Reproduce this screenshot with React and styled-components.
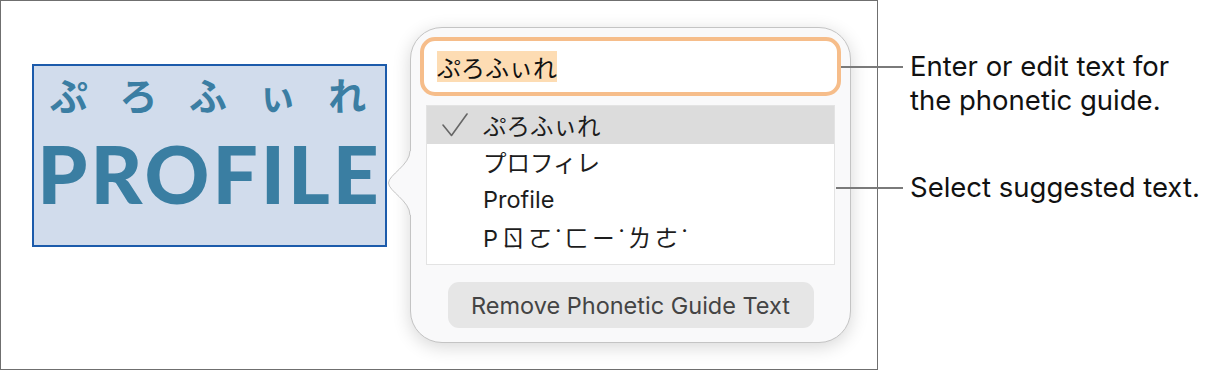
import React from 'react';
import styled, { createGlobalStyle } from 'styled-components';

const GlobalStyle = createGlobalStyle`
  html, body {
    margin: 0;
    padding: 0;
    background: #ffffff;
  }
  body {
    font-family: Inter, "Noto Sans CJK JP", sans-serif;
  }
`;

const suggestions = [
  { text: 'ぷろふぃれ', checked: true },
  { text: 'プロフィレ' },
  { text: 'Profile' },
  { text: 'Pㄖㄛ˙ㄈㄧ˙ㄌㄜ˙', bopomofo: true },
];

const furigana = ['ぷ', 'ろ', 'ふ', 'ぃ', 'れ'];

const App = () => {
  return (
    <>
      <GlobalStyle />
      <Page>
        <Frame>
          <TextBox>
            <Ruby>
              {furigana.map((k, i) => (
                <RubyChar key={i}>{k}</RubyChar>
              ))}
            </Ruby>
            <BigWord>PROFILE</BigWord>
          </TextBox>
          <Popover>
            <Arrow width="26" height="64" viewBox="0 0 26 64">
              <path d="M23 0 C23 14 1.5 24 1.5 32 C1.5 40 23 50 23 64 L26 64 L26 0 Z" fill="#f9f9fa" />
              <path d="M23 0 C23 14 1.5 24 1.5 32 C1.5 40 23 50 23 64" fill="none" stroke="#c4c4c4" strokeWidth="1" />
            </Arrow>
            <InputRing>
              <Selected>ぷろふぃれ</Selected>
            </InputRing>
            <List>
              {suggestions.map((s) => (
                <Row key={s.text} $active={s.checked}>
                  <CheckCell>
                    {s.checked && (
                      <svg width="26" height="24" viewBox="0 0 26 24">
                        <path d="M1 12 L9.5 22.5 L25 1" fill="none" stroke="#666" strokeWidth="1.6" strokeLinecap="round" strokeLinejoin="round" />
                      </svg>
                    )}
                  </CheckCell>
                  <RowText $bopomofo={s.bopomofo}>{s.text}</RowText>
                </Row>
              ))}
            </List>
            <RemoveBtn>Remove Phonetic Guide Text</RemoveBtn>
          </Popover>
        </Frame>
        <Notes>
          <Note $top={51} $reach={37}>
            <Leader $reach={37} />
            <NoteText>
              Enter or edit text for
              <br />
              the phonetic guide.
            </NoteText>
          </Note>
          <Note $top={55} $reach={42}>
            <Leader $reach={42} />
            <NoteText>Select suggested text.</NoteText>
          </Note>
        </Notes>
      </Page>
    </>
  );
};

const Page = styled.div`
  display: flex;
  align-items: flex-start;
  width: 1213px;
  height: 372px;
  overflow: hidden;
`;

const Frame = styled.div`
  box-sizing: border-box;
  flex: none;
  display: flex;
  align-items: flex-start;
  width: 878px;
  height: 370px;
  border: 1.5px solid #6f6f6f;
  padding-left: 31px;
`;

const TextBox = styled.div`
  box-sizing: border-box;
  width: 355px;
  height: 183px;
  margin-top: 63px;
  border: 2px solid #1c5bab;
  background: #d1dcec;
  display: flex;
  flex-direction: column;
  align-items: center;
`;

const Ruby = styled.div`
  display: grid;
  grid-template-columns: repeat(5, 1fr);
  width: 100%;
  padding: 6px 3px 0 0;
  box-sizing: border-box;
`;

const RubyChar = styled.span`
  text-align: center;
  font-family: "Noto Sans CJK JP", sans-serif;
  font-weight: 700;
  font-size: 38px;
  line-height: 44px;
  color: #3b7ea3;
`;

const BigWord = styled.div`
  margin-top: 17px;
  font-family: Lato, "Open Sans", sans-serif;
  font-weight: 900;
  font-size: 80px;
  line-height: 80px;
  letter-spacing: 3px;
  color: #3a7ea2;
`;

const Popover = styled.div`
  position: relative;
  box-sizing: border-box;
  width: 441px;
  height: 316px;
  margin-top: 26px;
  margin-left: 23px;
  padding: 9px 9px 0 9px;
  border: 1px solid #c4c4c4;
  border-radius: 32px;
  background: #f9f9fa;
  box-shadow: 0 4px 18px rgba(0, 0, 0, 0.16);
  display: flex;
  flex-direction: column;
  align-items: center;
`;

const Arrow = styled.svg`
  position: absolute;
  left: -24px;
  top: 123px;
`;

const InputRing = styled.div`
  box-sizing: border-box;
  width: 421px;
  height: 59px;
  border: 4px solid #f6bd8a;
  border-radius: 15px;
  background: #ffffff;
  display: flex;
  align-items: center;
  padding-left: 13px;
`;

const Selected = styled.span`
  font-family: "Noto Sans CJK JP", sans-serif;
  font-size: 24px;
  line-height: 31px;
  color: #111;
  background: #fddcb3;
`;

const List = styled.div`
  box-sizing: border-box;
  width: 409px;
  height: 160px;
  margin-top: 9px;
  border: 1.5px solid #e3e3e3;
  background: #ffffff;
`;

const Row = styled.div`
  display: flex;
  align-items: center;
  height: 37.5px;
  background: ${(p) => (p.$active ? '#dcdcdc' : 'transparent')};
`;

const CheckCell = styled.div`
  width: 56px;
  display: flex;
  justify-content: flex-end;
  padding-right: 15px;
  box-sizing: border-box;
`;

const RowText = styled.span`
  font-family: ${(p) =>
    p.$bopomofo ? 'Inter, "Noto Sans CJK TC", sans-serif' : 'Inter, "Noto Sans CJK JP", sans-serif'};
  font-size: 23.5px;
  letter-spacing: ${(p) => (p.$bopomofo ? '3.5px' : '0')};
  color: #1d1d1d;
  white-space: pre;
`;

const RemoveBtn = styled.button`
  width: 366px;
  height: 46px;
  margin-top: 17px;
  border: 0;
  border-radius: 11px;
  background: #e6e6e6;
  font-family: Inter, sans-serif;
  font-size: 23.5px;
  color: #444;
  padding: 0;
`;

const Notes = styled.div`
  display: flex;
  flex-direction: column;
`;

const Note = styled.div`
  position: relative;
  z-index: 1;
  display: flex;
  align-items: flex-start;
  margin-top: ${(p) => p.$top}px;
  margin-left: -${(p) => p.$reach}px;
`;

const Leader = styled.div`
  width: ${(p) => p.$reach + 25}px;
  height: 2px;
  margin-top: 15px;
  margin-right: 7px;
  background: #7a7a7a;
`;

const NoteText = styled.div`
  font-family: Inter, sans-serif;
  font-size: 27.5px;
  line-height: 34px;
  color: #111;
  margin-top: -2px;
`;

export default App;
